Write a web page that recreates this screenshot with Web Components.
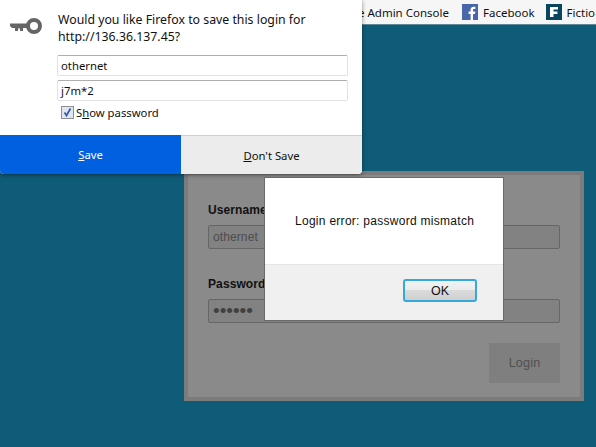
<!DOCTYPE html>
<html>
<head>
<meta charset="utf-8">
<title>Login</title>
<style>
html, body { margin: 0; height: 100%; }
body { width: 596px; height: 447px; overflow: hidden; position: relative; background: #0f5c78; }
</style>
</head>
<body>
<bookmark-bar>
  <bookmark-item style="margin-right: 13px">e Admin Console</bookmark-item>
  <bookmark-item icon="fb" style="margin-right: 11px">Facebook</bookmark-item>
  <bookmark-item icon="fic">Fictio</bookmark-item>
</bookmark-bar>
<login-card></login-card>
<save-popup></save-popup>
<alert-box>Login error: password mismatch</alert-box>

<script>
class BookmarkBar extends HTMLElement {
  constructor() {
    super();
    this.attachShadow({ mode: 'open' });
    this.shadowRoot.innerHTML = `
<style>
:host {
  display: flex;
  align-items: center;
  height: 24px;
  padding-left: 358px;
  background: #f6f6f6;
  box-shadow: 0 1px 0 #5d8b9c;
  box-sizing: border-box;
  white-space: nowrap;
  overflow: hidden;
  font: 11.5px "Noto Sans", sans-serif;
  color: #111;
}
</style>
<slot></slot>`;
  }
}

class BookmarkItem extends HTMLElement {
  constructor() {
    super();
    this.attachShadow({ mode: 'open' });
    const icons = {
      fb: `<svg width="16" height="16" viewBox="0 0 16 16"><rect width="16" height="16" fill="#4867aa"/><path d="M11 16V10h2l.3-2.4H11V6.1c0-.7.2-1.2 1.2-1.2h1.2V2.8c-.3 0-1-.1-1.8-.1-1.8 0-3 1.100-3 3.100v1.800H6.600V10h2V16z" fill="#fff"/></svg>`,
      fic: `<svg width="16" height="16" viewBox="0 0 16 16"><rect width="16" height="16" fill="#0a4560"/><path d="M4 3h8v2.600H7.500v1.900h3.900v2.500H7.500v3H4z" fill="#fff"/></svg>`,
    };
    const icon = icons[this.getAttribute('icon')] || '';
    this.shadowRoot.innerHTML = `
<style>
:host { display: inline-flex; align-items: center; gap: 5px; }
svg { display: block; }
</style>
${icon}<slot></slot>`;
  }
}

class LoginCard extends HTMLElement {
  constructor() {
    super();
    this.attachShadow({ mode: 'open' });
    this.shadowRoot.innerHTML = `
<style>
:host {
  display: block;
  box-sizing: border-box;
  width: 400px;
  height: 230px;
  margin: 147px 0 0 184px;
  padding: 28px 20px 0 20px;
  background: #8a8a8a;
  border: 4px solid #7b7b7b;
  font: 12px "Liberation Sans", sans-serif;
  color: #111;
}
label { display: block; font-weight: bold; line-height: 14px; margin-bottom: 8px; letter-spacing: .1px; }
.field {
  box-sizing: border-box;
  height: 24px;
  border: 1px solid #666;
  border-radius: 2px;
  background: #828282;
  padding: 0 4px;
  line-height: 22px;
  color: #4c4c4c;
  margin-bottom: 28px;
  letter-spacing: .1px;
}
.pw { font-size: 19px; letter-spacing: 0; margin-bottom: 0; overflow: hidden; color: #404040; }
.row { display: flex; justify-content: flex-end; margin-top: 20px; }
.btn {
  width: 71px;
  height: 40px;
  background: #7f7f7f;
  color: #4f4f4f;
  font-size: 12.5px;
  letter-spacing: .2px;
  display: flex;
  align-items: center;
  justify-content: center;
}
</style>
<label>Username</label>
<div class="field">othernet</div>
<label>Password</label>
<div class="field pw">••••••</div>
<div class="row"><div class="btn">Login</div></div>`;
  }
}

class SavePopup extends HTMLElement {
  constructor() {
    super();
    this.attachShadow({ mode: 'open' });
    this.shadowRoot.innerHTML = `
<style>
:host {
  position: absolute;
  left: 0;
  top: 0;
  width: 362px;
  height: 174px;
  background: #fff;
  border-radius: 0 0 4px 4px;
  box-shadow: 0 1px 4px rgba(0,0,0,.45);
  font: 11.3px "Noto Sans", sans-serif;
  color: #111;
  display: flex;
  flex-direction: column;
  overflow: hidden;
}
.body { flex: 1; display: flex; }
.key { width: 58px; flex: none; padding: 17px 0 0 9px; box-sizing: border-box; }
.key svg { display: block; }
.main { flex: 1; padding: 11px 14px 0 0; }
.msg { font-size: 12.3px; line-height: 17px; margin-bottom: 10px; white-space: nowrap; }
.input {
  box-sizing: border-box;
  height: 21px;
  margin: 0 0 4px -1px;
  padding: 0 3px;
  line-height: 19px;
  border: 1px solid #e0e2e6;
  border-top-color: #aeaeae;
  border-radius: 2px;
}
.check { display: flex; align-items: center; gap: 2px; margin: 4px 0 0 3px; line-height: 16px; }
.box {
  box-sizing: border-box;
  width: 13px;
  height: 13px;
  margin-top: -2px;
  border: 1px solid #8e8f8f;
  background: #dfe6f0;
}
.box svg { display: block; }
u { text-underline-offset: 1px; }
.actions { display: flex; height: 39px; flex: none; }
.save, .dont { display: flex; align-items: center; justify-content: center; }
.save { width: 181px; background: #0060df; color: #fff; }
.dont { flex: 1; background: #ececec; border-top: 1px solid #d0d0d0; }
</style>
<div class="body">
  <div class="key">
    <svg width="34" height="18" viewBox="0 0 34 18">
      <circle cx="25" cy="9" r="6" fill="none" stroke="#666" stroke-width="4"/>
      <path d="M1 6.500h17v4.500H14v3H11v-2.500H9v2.500H6v-3H3L1 9z" fill="#666"/>
    </svg>
  </div>
  <div class="main">
    <div class="msg">Would you like Firefox to save this login for<br>http://136.36.137.45?</div>
    <div class="input">othernet</div>
    <div class="input">j7m*2</div>
    <div class="check">
      <span class="box"><svg width="11" height="11" viewBox="0 0 11 11"><path d="M2.500 5.500l2 3 4-7" fill="none" stroke="#3b5fa8" stroke-width="1.800"/></svg></span>
      <span>S<u>h</u>ow password</span>
    </div>
  </div>
</div>
<div class="actions">
  <div class="save"><span><u>S</u>ave</span></div>
  <div class="dont"><span><u>D</u>on't Save</span></div>
</div>`;
  }
}

class AlertBox extends HTMLElement {
  constructor() {
    super();
    this.attachShadow({ mode: 'open' });
    this.shadowRoot.innerHTML = `
<style>
:host {
  position: absolute;
  left: 265px;
  top: 178px;
  width: 238px;
  height: 142px;
  box-sizing: border-box;
  background: #fff;
  box-shadow: 0 0 0 1px #6a6a6a;
  font: 12px "Liberation Sans", sans-serif;
  color: #111;
  display: flex;
  flex-direction: column;
}
.text { height: 86px; box-sizing: border-box; padding: 36px 0 0 30px; line-height: 14px; letter-spacing: .28px; }
.foot {
  flex: 1;
  display: flex;
  justify-content: flex-end;
  align-items: flex-start;
  padding: 14px 26px 0 0;
  background: #f0f0f0;
  border-top: 1px solid #e4e4e4;
}
.ok {
  box-sizing: border-box;
  width: 74px;
  height: 23px;
  border: 2px solid #35a9dd;
  border-radius: 3px;
  background: linear-gradient(#f2f2f2 0, #ececec 45%, #dcdcdc 45%, #cfcfcf 100%);
  font-size: 12.5px;
  display: flex;
  align-items: center;
  justify-content: center;
}
</style>
<div class="text"><slot></slot></div>
<div class="foot"><div class="ok">OK</div></div>`;
  }
}

customElements.define('bookmark-bar', BookmarkBar);
customElements.define('bookmark-item', BookmarkItem);
customElements.define('login-card', LoginCard);
customElements.define('save-popup', SavePopup);
customElements.define('alert-box', AlertBox);
</script>
</body>
</html>
